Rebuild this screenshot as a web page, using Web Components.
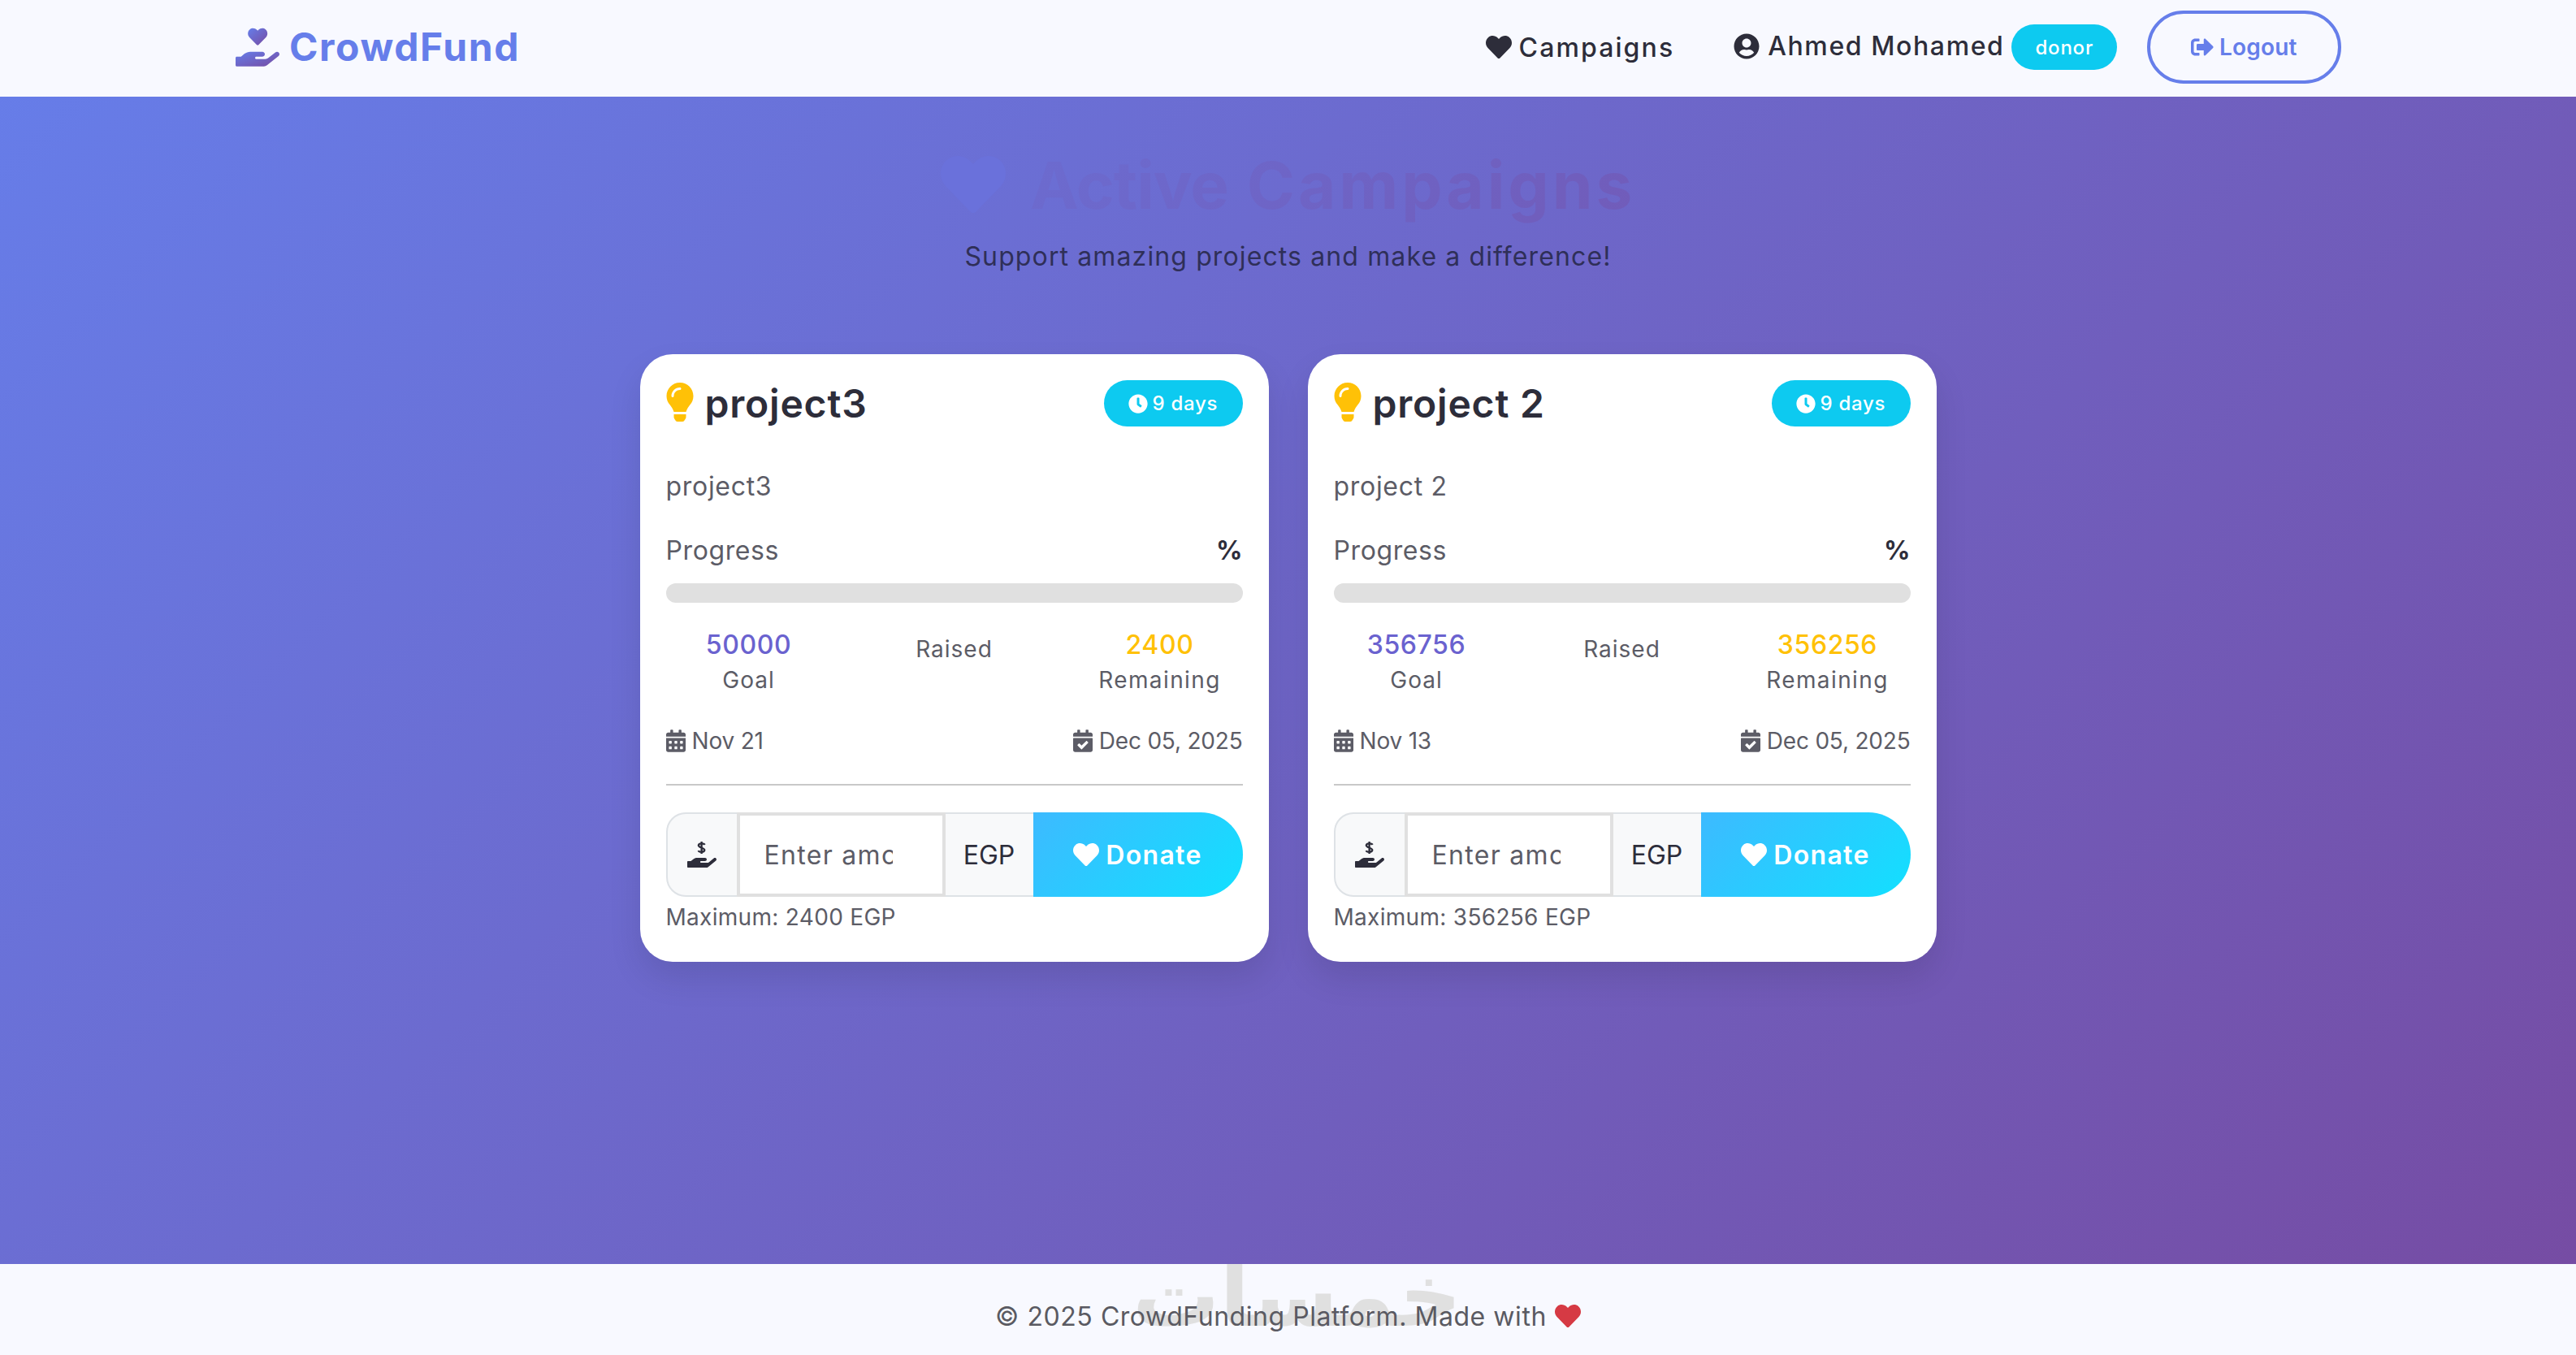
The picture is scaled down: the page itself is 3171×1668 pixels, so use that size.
<!DOCTYPE html>
<html lang="en">
<head>
<meta charset="utf-8">
<title>CrowdFund</title>
<style>
  html, body { margin: 0; height: 100%; }
  body {
    display: flex;
    flex-direction: column;
    min-height: 1668px;
    font-family: Inter, "Noto Sans", sans-serif;
    color: #2d2d3a;
  }
</style>
</head>
<body>
<app-nav user="Ahmed Mohamed" role="donor"></app-nav>
<campaign-page>
  <campaign-card title="project3" description="project3" days="9" goal="50000" remaining="2400" start="Nov 21" end="Dec 05, 2025"></campaign-card>
  <campaign-card title="project 2" description="project 2" days="9" goal="356756" remaining="356256" start="Nov 13" end="Dec 05, 2025"></campaign-card>
</campaign-page>
<app-footer></app-footer>

<script>
const HEART = "M462.3 62.6C407.5 15.9 326 24.3 275.7 76.2L256 96.5l-19.7-20.3C186.1 24.3 104.5 15.9 49.7 62.6c-62.8 53.6-66.1 149.8-9.9 207.9l193.5 199.8c12.5 12.9 32.8 12.9 45.3 0l193.5-199.8c56.3-58.1 53-154.3-9.8-207.9z";
const HAND = "M565.3 328.1c-11.8-10.7-30.2-10-42.6 0L430.3 402c-11.3 9.1-25.4 14-40 14H272c-8.8 0-16-7.2-16-16s7.2-16 16-16h78.3c15.9 0 30.7-10.9 33.3-26.6 3.3-20-12.1-37.4-31.6-37.4H192c-27 0-53.1 9.3-74.1 26.3L71.4 384H16c-8.8 0-16 7.2-16 16v96c0 8.8 7.2 16 16 16h356.7c14.5 0 28.6-4.9 40-14L564 377c15.2-12.1 16.4-35.3 1.3-48.9z";

const ICONS = {
  heart: ["0 0 512 512", `<path d="${HEART}"/>`],
  clock: ["0 0 512 512", `<path d="M256,8C119,8,8,119,8,256S119,504,256,504,504,393,504,256,393,8,256,8Zm92.49,313h0l-20,25a16,16,0,0,1-22.49,2.5h0l-67-49.72a40,40,0,0,1-15-31.23V112a16,16,0,0,1,16-16h32a16,16,0,0,1,16,16V256l58,42.5A16,16,0,0,1,348.49,321Z"/>`],
  user: ["0 0 496 512", `<path d="M248 8C111 8 0 119 0 256s111 248 248 248 248-111 248-248S385 8 248 8zm0 96c48.6 0 88 39.4 88 88s-39.4 88-88 88-88-39.4-88-88 39.4-88 88-88zm0 344c-58.7 0-111.3-26.6-146.5-68.2 18.8-35.4 55.6-59.8 98.5-59.8 2.4 0 4.8.4 7.1 1.1 13 4.2 26.6 6.9 40.9 6.9 14.3 0 28-2.7 40.9-6.9 2.3-.7 4.7-1.1 7.1-1.1 42.9 0 79.7 24.4 98.5 59.8C359.3 421.4 306.7 448 248 448z"/>`],
  logout: ["0 0 512 512", `<path d="M497 273L329 441c-15 15-41 4.5-41-17v-96H152c-13.3 0-24-10.7-24-24v-96c0-13.3 10.7-24 24-24h136V88c0-21.4 25.9-32 41-17l168 168c9.3 9.4 9.3 24.6 0 34zM192 436v-40c0-6.6-5.4-12-12-12H96c-17.7 0-32-14.3-32-32V160c0-17.7 14.3-32 32-32h84c6.6 0 12-5.4 12-12V76c0-6.6-5.4-12-12-12H96c-53 0-96 43-96 96v192c0 53 43 96 96 96h84c6.6 0 12-5.4 12-12z"/>`],
  bulb: ["0 0 352 512", `<path d="M96.06 454.35c.01 6.29 1.87 12.45 5.36 17.69l17.09 25.69a31.99 31.99 0 0 0 26.64 14.28h61.71a31.99 31.99 0 0 0 26.64-14.28l17.09-25.69a31.989 31.989 0 0 0 5.36-17.69l.04-38.35H96.01l.05 38.35zM0 176c0 44.37 16.45 84.85 43.56 115.78 16.52 18.85 42.36 58.23 52.21 91.45.04.26.11.52.15.78h160.16c.04-.26.11-.51.15-.78 9.85-33.22 35.69-72.6 52.21-91.45C335.55 260.85 352 220.37 352 176 352 78.61 272.91-.3 175.45 0 73.44.31 0 82.97 0 176zm176-80c-44.11 0-80 35.89-80 80 0 8.84-7.16 16-16 16s-16-7.16-16-16c0-61.76 50.24-112 112-112 8.84 0 16 7.16 16 16s-7.16 16-16 16z"/>`],
  calendar: ["0 0 448 512", `<path d="M0 464c0 26.5 21.5 48 48 48h352c26.5 0 48-21.5 48-48V192H0v272zm320-196c0-6.6 5.4-12 12-12h40c6.6 0 12 5.4 12 12v40c0 6.6-5.4 12-12 12h-40c-6.6 0-12-5.4-12-12v-40zm0 128c0-6.6 5.4-12 12-12h40c6.6 0 12 5.4 12 12v40c0 6.6-5.4 12-12 12h-40c-6.6 0-12-5.4-12-12v-40zM192 268c0-6.6 5.4-12 12-12h40c6.6 0 12 5.4 12 12v40c0 6.6-5.4 12-12 12h-40c-6.6 0-12-5.4-12-12v-40zm0 128c0-6.6 5.4-12 12-12h40c6.6 0 12 5.4 12 12v40c0 6.6-5.4 12-12 12h-40c-6.6 0-12-5.4-12-12v-40zM64 268c0-6.6 5.4-12 12-12h40c6.6 0 12 5.4 12 12v40c0 6.6-5.4 12-12 12H76c-6.6 0-12-5.4-12-12v-40zm0 128c0-6.6 5.4-12 12-12h40c6.6 0 12 5.4 12 12v40c0 6.6-5.4 12-12 12H76c-6.6 0-12-5.4-12-12v-40zM400 64h-48V16c0-8.8-7.2-16-16-16h-32c-8.8 0-16 7.2-16 16v48H160V16c0-8.8-7.2-16-16-16h-32c-8.8 0-16 7.2-16 16v48H48C21.5 64 0 85.5 0 112v48h448v-48c0-26.5-21.5-48-48-48z"/>`],
  "calendar-check": ["0 0 448 512", `<path d="M436 160H12c-6.627 0-12-5.373-12-12v-36c0-26.51 21.49-48 48-48h48V12c0-6.627 5.373-12 12-12h40c6.627 0 12 5.373 12 12v52h128V12c0-6.627 5.373-12 12-12h40c6.627 0 12 5.373 12 12v52h48c26.51 0 48 21.49 48 48v36c0 6.627-5.373 12-12 12zM12 192h424c6.627 0 12 5.373 12 12v260c0 26.51-21.49 48-48 48H48c-26.51 0-48-21.49-48-48V204c0-6.627 5.373-12 12-12zm333.296 95.947l-28.169-28.398c-4.667-4.705-12.265-4.736-16.97-.068L194.12 364.665l-45.98-46.352c-4.667-4.705-12.266-4.736-16.971-.068l-28.397 28.17c-4.705 4.667-4.736 12.265-.068 16.97l82.601 83.269c4.667 4.705 12.265 4.736 16.97.068l142.953-141.805c4.705-4.667 4.736-12.265.068-16.97z"/>`],
  "hand-usd": ["0 0 576 512", `<path d="${HAND}"/><path d="M345 62C330 30 230 25 222 72C215 125 345 115 340 170C335 215 235 215 218 178M282 0V240" fill="none" stroke="currentColor" stroke-width="38"/>`],
  "hand-heart": ["0 0 576 512", `<defs><linearGradient id="g" x1="0" y1="0" x2="1" y2="1"><stop offset="0" stop-color="#667eea"/><stop offset="1" stop-color="#764ba2"/></linearGradient></defs><g fill="url(#g)"><path d="${HAND}" transform="translate(0 -4)"/><path d="${HEART}" transform="translate(162 -8) scale(.5)"/></g>`],
};

class FaIcon extends HTMLElement {
  connectedCallback() {
    const [box, body] = ICONS[this.getAttribute("name")];
    this.attachShadow({ mode: "open" }).innerHTML = `
      <style>
        :host { display: inline-flex; flex: 0 0 auto; }
        svg { display: block; width: 100%; height: 100%; fill: currentColor; }
      </style>
      <svg viewBox="${box}" aria-hidden="true">${body}</svg>`;
  }
}
customElements.define("fa-icon", FaIcon);

class AppNav extends HTMLElement {
  connectedCallback() {
    this.attachShadow({ mode: "open" }).innerHTML = `
      <style>
        :host {
          display: flex;
          align-items: center;
          justify-content: space-between;
          flex: 0 0 auto;
          box-sizing: border-box;
          height: 119px;
          padding: 0 289px 3px 290px;
          background: #f8f9ff;
        }
        .brand {
          display: flex;
          align-items: center;
          gap: 12px;
          margin-top: -2px;
          font-size: 48px;
          font-weight: 700;
          letter-spacing: 1.6px;
          color: #667eea;
        }
        .brand fa-icon { width: 54px; height: 48px; margin-top: 2px; }
        .right { display: flex; align-items: center; }
        .link, .user { display: flex; align-items: center; font-size: 32px; font-weight: 500; }
        .link { gap: 9px; margin-right: 73px; letter-spacing: 2.1px; }
        .link fa-icon { width: 32px; height: 32px; }
        .user { gap: 10px; margin-top: -3px; letter-spacing: 1.6px; }
        .user fa-icon { width: 32px; height: 32px; }
        .role {
          display: flex;
          align-items: center;
          height: 56px;
          padding: 0 29px;
          margin-left: 9px;
          border-radius: 28px;
          background: #0dcaf0;
          color: #fff;
          font-size: 24px;
          font-weight: 500;
          letter-spacing: .8px;
        }
        .logout {
          display: flex;
          align-items: center;
          gap: 7px;
          box-sizing: border-box;
          width: 239px;
          height: 90px;
          margin-left: 37px;
          padding-left: 50px;
          border: 4px solid #667eea;
          border-radius: 45px;
          color: #667eea;
          font-size: 28px;
          font-weight: 600;
          letter-spacing: .2px;
        }
        .logout fa-icon { width: 28px; height: 28px; }
      </style>
      <div class="brand"><fa-icon name="hand-heart"></fa-icon>CrowdFund</div>
      <div class="right">
        <div class="link"><fa-icon name="heart"></fa-icon>Campaigns</div>
        <div class="user"><fa-icon name="user"></fa-icon>${this.getAttribute("user")}</div>
        <div class="role">${this.getAttribute("role")}</div>
        <div class="logout"><fa-icon name="logout"></fa-icon>Logout</div>
      </div>`;
  }
}
customElements.define("app-nav", AppNav);

class CampaignPage extends HTMLElement {
  connectedCallback() {
    this.attachShadow({ mode: "open" }).innerHTML = `
      <style>
        :host {
          display: flex;
          flex-direction: column;
          align-items: center;
          flex: 1 1 auto;
          padding-top: 49px;
          background: linear-gradient(135deg, #667eea 0%, #764ba2 100%) 0 -119px / 100% 1668px no-repeat;
        }
        h1 {
          box-sizing: border-box;
          width: 2592px;
          margin: 0;
          text-align: center;
          font-size: 80px;
          line-height: 120px;
          font-weight: 700;
          letter-spacing: 3.9px;
          background: linear-gradient(135deg, #667eea 0%, #764ba2 100%);
          -webkit-background-clip: text;
          background-clip: text;
          color: transparent;
        }
        h1 fa-icon { width: 80px; height: 80px; margin-right: 30px; vertical-align: -10px; color: #6a71db; }
        h1 .first { letter-spacing: -1px; }
        p {
          margin: 1px 0 0;
          font-size: 32px;
          line-height: 54px;
          letter-spacing: 1.12px;
          color: #2f2f58;
        }
        .grid {
          display: grid;
          grid-template-columns: repeat(2, 774px);
          gap: 48px;
          margin-top: 93px;
        }
      </style>
      <h1><fa-icon name="heart"></fa-icon><span class="first">Active</span> Campaigns</h1>
      <p>Support amazing projects and make a difference!</p>
      <div class="grid"><slot></slot></div>`;
  }
}
customElements.define("campaign-page", CampaignPage);

class CampaignCard extends HTMLElement {
  connectedCallback() {
    const a = (n) => this.getAttribute(n);
    this.attachShadow({ mode: "open" }).innerHTML = `
      <style>
        :host {
          display: block;
          box-sizing: border-box;
          height: 748px;
          padding: 32px 32px 0;
          background: #fff;
          border-radius: 40px;
          box-shadow: 0 20px 40px rgba(0,0,0,.1);
          font-size: 28px;
          color: #5c5c66;
        }
        .head { display: flex; align-items: center; justify-content: space-between; height: 57px; }
        h3 {
          display: flex;
          align-items: center;
          gap: 14px;
          margin: 0;
          font-size: 48px;
          font-weight: 600;
          letter-spacing: .8px;
          color: #2d2d3a;
        }
        h3 fa-icon { width: 34px; height: 48px; color: #ffc107; margin-top: -3px; }
        .days {
          display: flex;
          align-items: center;
          gap: 6px;
          box-sizing: border-box;
          width: 171px;
          height: 57px;
          padding-left: 30px;
          border-radius: 29px;
          background: #0dcaf0;
          color: #fff;
          font-size: 24px;
          font-weight: 500;
          letter-spacing: .7px;
        }
        .days fa-icon { width: 24px; height: 24px; }
        .desc { margin-top: 52px; height: 44px; line-height: 44px; font-size: 32px; letter-spacing: .7px; }
        .prog { display: flex; justify-content: space-between; margin-top: 35px; height: 44px; line-height: 44px; font-size: 32px; letter-spacing: .6px; }
        .prog b { font-weight: 700; color: #2d2d3a; font-size: 32px; letter-spacing: 0; }
        .bar { height: 24px; margin-top: 18px; border-radius: 12px; background: #e0e0e0; }
        .stats { display: grid; grid-template-columns: repeat(3, 204px); justify-content: space-between; margin-top: 30px; text-align: center; letter-spacing: 1px; }
        .val { height: 44px; line-height: 44px; font-size: 32px; font-weight: 500; letter-spacing: .6px; }
        .goal { color: #6a62cf; }
        .left { color: #ffc107; }
        .lbl { height: 44px; line-height: 44px; margin-top: -1px; }
        .stats > div:last-child .lbl { letter-spacing: 1.4px; }
        .raised { padding-top: 6px; }
        .dates { display: flex; justify-content: space-between; align-items: center; height: 44px; margin-top: 31px; letter-spacing: -.2px; }
        .dates span { display: flex; align-items: center; gap: 8px; }
        .dates fa-icon { width: 24px; height: 28px; }
        hr { height: 2px; margin: 31px 0 0; border: 0; background: #c8c8c8; }
        .max { height: 42px; line-height: 42px; margin-top: 4px; letter-spacing: .3px; }
      </style>
      <div class="head">
        <h3><fa-icon name="bulb"></fa-icon>${a("title")}</h3>
        <div class="days"><fa-icon name="clock"></fa-icon>${a("days")} days</div>
      </div>
      <div class="desc">${a("description")}</div>
      <div class="prog"><span>Progress</span><b>%</b></div>
      <div class="bar"></div>
      <div class="stats">
        <div><div class="val goal">${a("goal")}</div><div class="lbl">Goal</div></div>
        <div class="raised"><div class="lbl">Raised</div></div>
        <div><div class="val left">${a("remaining")}</div><div class="lbl">Remaining</div></div>
      </div>
      <div class="dates">
        <span><fa-icon name="calendar"></fa-icon>${a("start")}</span>
        <span><fa-icon name="calendar-check"></fa-icon>${a("end")}</span>
      </div>
      <hr>
      <donate-form></donate-form>
      <div class="max">Maximum: ${a("remaining")} EGP</div>`;
  }
}
customElements.define("campaign-card", CampaignCard);

class DonateForm extends HTMLElement {
  connectedCallback() {
    this.attachShadow({ mode: "open" }).innerHTML = `
      <style>
        :host { display: flex; height: 104px; margin-top: 33px; }
        .addon {
          display: flex;
          align-items: center;
          justify-content: center;
          box-sizing: border-box;
          background: #f8f9fa;
          border: 2px solid #dee2e6;
          color: #2d2d3a;
          font-size: 32px;
        }
        .icon { width: 87px; border-right: 0; border-radius: 24px 0 0 24px; }
        .icon fa-icon { width: 36px; height: 32px; }
        input {
          box-sizing: border-box;
          width: 257px;
          min-width: 0;
          height: 100%;
          padding: 0 46px 0 30px;
          border: 4px solid #e0e0e0;
          background: #fff;
          font: 400 32px Inter, "Noto Sans", sans-serif;
          letter-spacing: 1.3px;
          outline: 0;
        }
        input::placeholder { color: #5c5c66; opacity: 1; }
        .egp { width: 108px; border-left: 0; border-right: 0; }
        .btn {
          display: flex;
          align-items: center;
          justify-content: center;
          gap: 8px;
          flex: 1;
          border-radius: 0 52px 52px 0;
          background: linear-gradient(135deg, #3dbaff 0%, #12e0ff 100%);
          color: #fff;
          font-size: 32px;
          font-weight: 600;
          letter-spacing: 1.3px;
        }
        .btn fa-icon { width: 32px; height: 32px; }
      </style>
      <div class="addon icon"><fa-icon name="hand-usd"></fa-icon></div>
      <input type="number" placeholder="Enter amount">
      <div class="addon egp">EGP</div>
      <div class="btn"><fa-icon name="heart"></fa-icon>Donate</div>`;
  }
}
customElements.define("donate-form", DonateForm);

class AppFooter extends HTMLElement {
  connectedCallback() {
    this.attachShadow({ mode: "open" }).innerHTML = `
      <style>
        :host {
          display: flex;
          position: relative;
          align-items: center;
          justify-content: center;
          gap: 10px;
          flex: 0 0 auto;
          box-sizing: border-box;
          height: 112px;
          padding-top: 16px;
          overflow: hidden;
          background: #f8f9ff;
          font-size: 32px;
          letter-spacing: .55px;
          color: #5a5a62;
        }
        .mark {
          position: absolute;
          left: 1394px;
          top: 4px;
          font: 700 107px/70px "DejaVu Sans", sans-serif;
          letter-spacing: 0;
          color: #e0e0e0;
        }
        span { position: relative; }
        fa-icon { position: relative; width: 32px; height: 32px; color: #d63a44; }
      </style>
      <div class="mark" lang="ar" dir="rtl">خمسات</div>
      <span>© 2025 CrowdFunding Platform. Made with</span><fa-icon name="heart"></fa-icon>`;
  }
}
customElements.define("app-footer", AppFooter);
</script>
</body>
</html>
